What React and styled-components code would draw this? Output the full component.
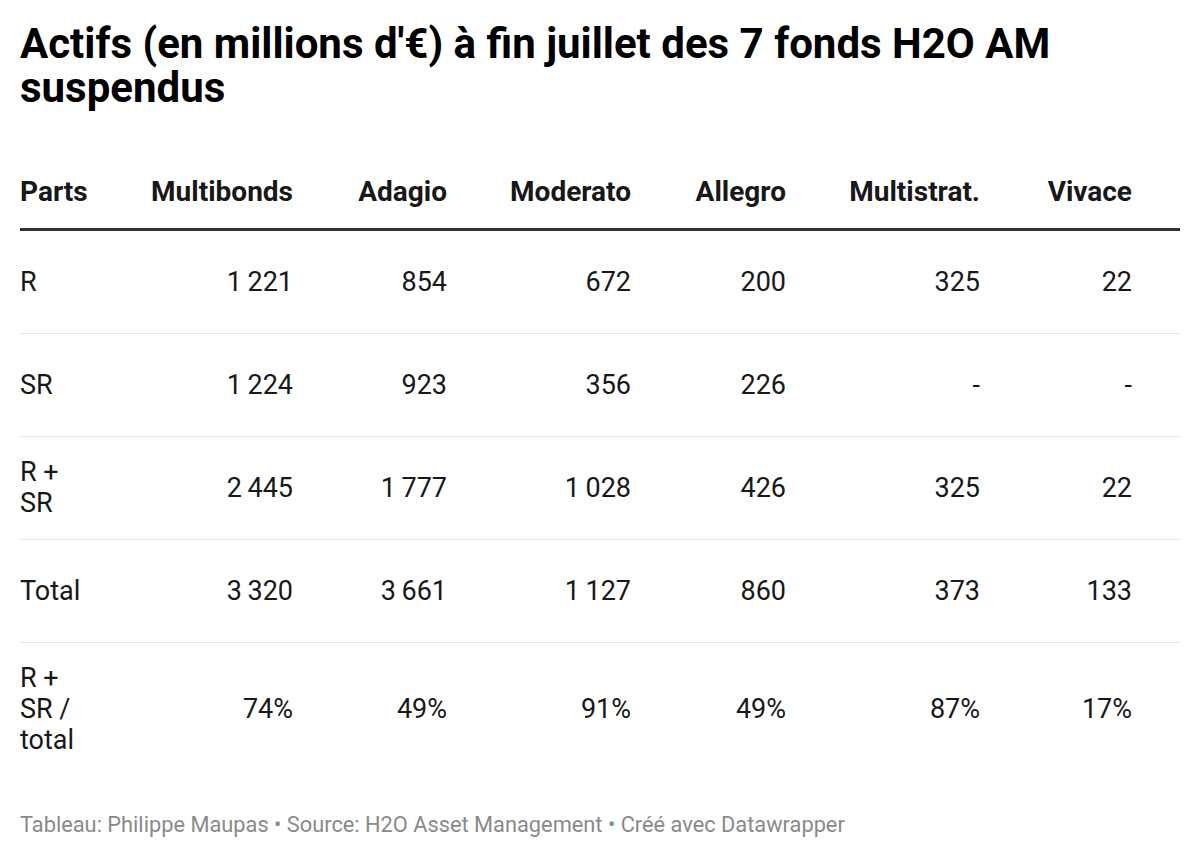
import React from "react";
import styled, { createGlobalStyle } from "styled-components";

const Global = createGlobalStyle`
  html, body { margin: 0; padding: 0; background: #ffffff; }
  body { font-family: Roboto, "Liberation Sans", sans-serif; color: #181818; }
`;

const Page = styled.div`
  width: 1200px;
  box-sizing: border-box;
  padding: 22px 20px 0 20px;
`;

const Title = styled.h1`
  margin: 0;
  font-family: Roboto, sans-serif;
  font-weight: 700;
  font-size: 42px;
  line-height: 44px;
  color: #000;
`;

const Table = styled.div`
  margin-top: 66px;
  width: 1160px;
`;

const COLS = "119px 154px 154px 184px 155px 194px 152px 48px";

const Row = styled.div`
  display: grid;
  grid-template-columns: ${COLS};
  align-items: center;
  min-height: ${(p) => (p.$header ? "0" : "103px")};
  box-sizing: border-box;
  padding: ${(p) => (p.$header ? "0 0 21px" : "20px 0")};
  border-bottom: ${(p) =>
    p.$header ? "3px solid #333333" : p.$last ? "none" : "1px solid #e6e6e6"};
`;

const Cell = styled.div`
  font-size: ${(p) => (p.$bold ? "28px" : "27px")};
  line-height: 31px;
  font-weight: ${(p) => (p.$bold ? 700 : 400)};
  text-align: ${(p) => (p.$left ? "left" : "right")};
  color: #181818;
  white-space: ${(p) => (p.$left ? "normal" : "nowrap")};
`;

const LabelCell = styled(Cell)`
  width: 78px;
`;

const Footer = styled.div`
  margin-top: 36px;
  font-size: 21.8px;
  line-height: 26px;
  color: #8a8a8a;
`;

const NB = "\u2009";
const headers = ["Multibonds", "Adagio", "Moderato", "Allegro", "Multistrat.", "Vivace"];
const rows = [
  ["R", [`1${NB}221`, "854", "672", "200", "325", "22"]],
  ["SR", [`1${NB}224`, "923", "356", "226", "-", "-"]],
  ["R + SR", [`2${NB}445`, `1${NB}777`, `1${NB}028`, "426", "325", "22"]],
  ["Total", [`3${NB}320`, `3${NB}661`, `1${NB}127`, "860", "373", "133"]],
  ["R + SR / total", ["74%", "49%", "91%", "49%", "87%", "17%"]],
];

export default function App() {
  return (
    <>
      <Global />
      <Page>
        <Title>Actifs (en millions d'€) à fin juillet des 7 fonds H2O AM suspendus</Title>
        <Table>
          <Row $header>
            <Cell $bold $left>Parts</Cell>
            {headers.map((h) => (
              <Cell $bold key={h}>{h}</Cell>
            ))}
            <div />
          </Row>
          {rows.map(([label, vals], i) => (
            <Row key={label} $last={i === rows.length - 1}>
              <LabelCell $left>{label}</LabelCell>
              {vals.map((v, j) => (
                <Cell key={j}>{v}</Cell>
              ))}
              <div />
            </Row>
          ))}
        </Table>
        <Footer>Tableau: Philippe Maupas • Source: H2O Asset Management • Créé avec Datawrapper</Footer>
      </Page>
    </>
  );
}
